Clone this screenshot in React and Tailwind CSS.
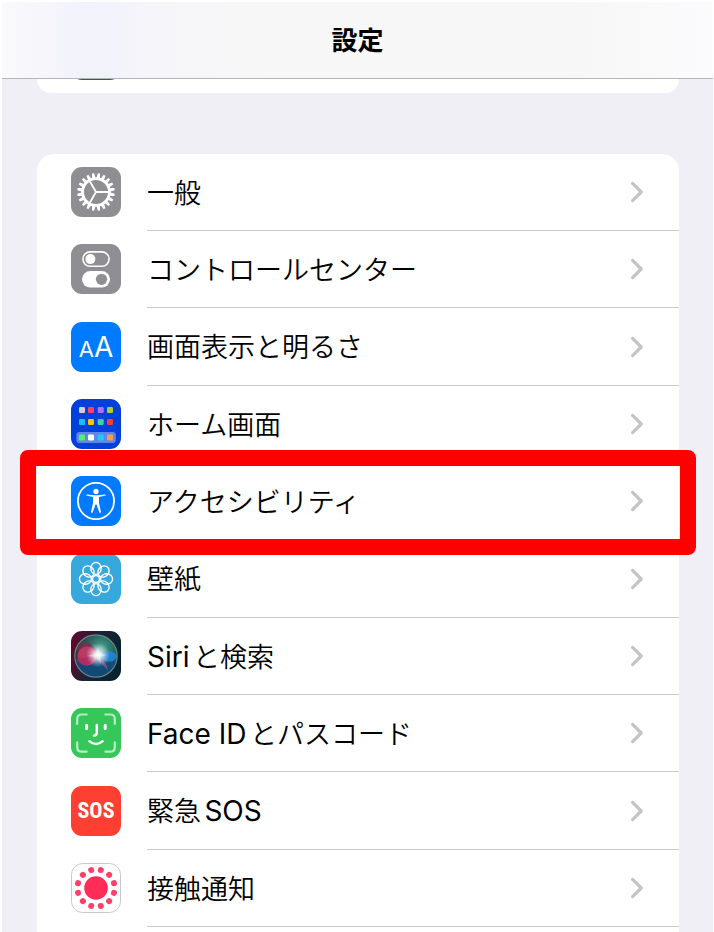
const ICON_CLASS = 'size-[50px] shrink-0 mb-px';

const GeneralIcon = () => (
  <svg viewBox="0 0 50 50" className={ICON_CLASS} aria-hidden="true">
    <rect width="50" height="50" rx="11" fill="#8e8e93" />
    {Array.from({ length: 20 }, (_, i) => (
      <path key={i} d="M23.2 11.5 L23.9 6.2 H26.1 L26.8 11.5 Z" fill="#fff" transform={`rotate(${i * 18 + 9} 25 25)`} />
    ))}
    <circle cx="25" cy="25" r="13.4" fill="none" stroke="#fff" strokeWidth="2.8" />
    <path d="M25 25 H38 M25 25 L18.5 13.8 M25 25 L18.5 36.2" stroke="#fff" strokeWidth="1.8" />
  </svg>
);

const ControlCenterIcon = () => (
  <svg viewBox="0 0 50 50" className={ICON_CLASS} aria-hidden="true">
    <rect width="50" height="50" rx="11" fill="#8e8e93" />
    <rect x="11.9" y="7.9" width="26.2" height="14.4" rx="7.2" fill="none" stroke="#fff" strokeWidth="1.6" />
    <circle cx="19.4" cy="15.1" r="5" fill="#fff" />
    <rect x="11" y="27" width="28" height="16.6" rx="8.3" fill="#fff" />
    <circle cx="30.5" cy="35.3" r="5.6" fill="#8e8e93" />
  </svg>
);

const DisplayIcon = () => (
  <span className="size-[50px] shrink-0 mb-px rounded-[11px] bg-[#007aff] text-white font-normal flex items-baseline justify-center leading-[50px]" aria-hidden="true">
    <span className="text-[22px]">A</span>
    <span className="text-[28px]">A</span>
  </span>
);

const APP_COLORS = [
  ['#d1d1d6', '#ff4068', '#b66dff', '#a8d233'],
  ['#19bfff', '#ffc400', '#3bd6a0', '#ff3b30'],
  ['#55ee70', '#ffffff', '#19ccff', '#ff9a42'],
];
const APP_X = [8, 17, 26.7, 36];
const APP_Y = [8, 20, 35.4];

const HomeScreenIcon = () => (
  <svg viewBox="0 0 50 50" className={ICON_CLASS} aria-hidden="true">
    <rect width="50" height="50" rx="11" fill="#0240dc" />
    <rect x="5.4" y="33" width="39.4" height="11" rx="3" fill="#5f86e8" />
    {APP_COLORS.map((row, r) =>
      row.map((color, c) => (
        <rect key={`${r}-${c}`} x={APP_X[c]} y={APP_Y[r]} width="6" height="6" rx="1.2" fill={color} />
      ))
    )}
  </svg>
);

const AccessibilityIcon = () => (
  <svg viewBox="0 0 50 50" className={ICON_CLASS} aria-hidden="true">
    <rect width="50" height="50" rx="11" fill="#007aff" />
    <circle cx="25" cy="25" r="18.1" fill="none" stroke="#fff" strokeWidth="1.8" />
    <circle cx="25" cy="15.4" r="2.6" fill="#fff" />
    <path
      d="M16.3 18.4 L22.8 19.2 H27.2 L33.7 18.4 Q34.9 18.5 34.7 19.6 L28 21.1 V27 L30 36 Q29.8 37.4 28.6 37 L25.5 28.6 H24.5 L21.4 37 Q20.2 37.4 20 36 L22 27 V21.1 L15.3 19.6 Q15.1 18.5 16.3 18.4 Z"
      fill="#fff"
    />
  </svg>
);

const WallpaperIcon = () => (
  <svg viewBox="0 0 50 50" className={ICON_CLASS} aria-hidden="true">
    <rect width="50" height="50" rx="11" fill="#36a8dc" />
    <g fill="none" stroke="#fff" strokeWidth="1.4">
      {Array.from({ length: 8 }, (_, i) => (
        <ellipse key={i} cx="25" cy="14.4" rx="5.2" ry="6" transform={`rotate(${i * 45} 25 25)`} />
      ))}
      <circle cx="25" cy="25" r="3.4" />
    </g>
  </svg>
);

const SiriIcon = () => (
  <svg viewBox="0 0 50 50" className={ICON_CLASS} aria-hidden="true">
    <defs>
      <linearGradient id="siri-bg" x1="0" y1="0.3" x2="1" y2="0.6">
        <stop offset="0" stopColor="#5c0b2b" />
        <stop offset="0.45" stopColor="#1c2237" />
        <stop offset="1" stopColor="#06222f" />
      </linearGradient>
      <radialGradient id="siri-green" cx="0.6" cy="0.35" r="0.5">
        <stop offset="0" stopColor="#4fae97" />
        <stop offset="1" stopColor="#0f5a4e" stopOpacity="0.5" />
      </radialGradient>
      <radialGradient id="siri-glow">
        <stop offset="0" stopColor="#fff" />
        <stop offset="0.3" stopColor="#fff" stopOpacity="0.8" />
        <stop offset="1" stopColor="#d9d0ff" stopOpacity="0" />
      </radialGradient>
      <clipPath id="siri-orb">
        <circle cx="25" cy="25" r="21" />
      </clipPath>
    </defs>
    <rect width="50" height="50" rx="11" fill="url(#siri-bg)" />
    <g clipPath="url(#siri-orb)">
      <rect width="50" height="50" fill="url(#siri-green)" />
      <path d="M4 29 Q16 36 27 24 Q36 33 47 27 V48 H4 Z" fill="#124b82" opacity="0.8" />
      <path d="M4 20 Q15 0 27 23 Q20 15 4 20 Z" fill="#812a50" opacity="0.75" />
      <ellipse cx="16" cy="25" rx="9.6" ry="9.6" fill="#dd3567" opacity="0.8" />
      <path d="M5 28 Q15 42 26 24 Q19 26 5 28 Z" fill="#a72966" opacity="0.7" />
      <ellipse cx="38" cy="25.5" rx="7.5" ry="5.2" fill="#2087de" opacity="0.85" />
      <path d="M27 24 Q35 30 37 39 Q30 34 27 24 Z" fill="#8b5877" opacity="0.8" />
    </g>
    <circle cx="25" cy="25" r="21.2" fill="none" stroke="#83a9a5" strokeWidth="1.2" opacity="0.7" />
    <circle cx="27" cy="24" r="12" fill="url(#siri-glow)" />
    <path d="M27 16 L28.8 22.3 L36 24 L28.8 25.8 L30 33 L25.8 26.4 L17 25 L24.5 22.7 Z" fill="#fff" opacity="0.4" />
  </svg>
);

const FaceIdIcon = () => (
  <svg viewBox="0 0 50 50" className={ICON_CLASS} aria-hidden="true">
    <rect width="50" height="50" rx="11" fill="#35c75a" />
    <g fill="none" stroke="#fff" strokeLinecap="round">
      <path
        d="M6.2 16 V11 Q6.2 6.5 10.7 6.5 H15.6 M34.4 6.5 H39.3 Q43.8 6.5 43.8 11 V16 M43.8 34.4 V39.2 Q43.8 43.7 39.3 43.7 H34.4 M15.6 43.7 H10.7 Q6.2 43.7 6.2 39.2 V34.4"
        strokeWidth="2.2"
        opacity="0.65"
      />
      <path d="M15.6 17.2 V20.6 M34.2 17.2 V20.6" strokeWidth="3" />
      <path d="M25.8 17 V24.8 Q25.8 27.5 22.9 27.6" strokeWidth="2.4" />
      <path d="M18.3 33.2 Q25 39 31.7 33.2" strokeWidth="2.4" />
    </g>
  </svg>
);

const SosIcon = () => (
  <span className="size-[50px] shrink-0 mb-px rounded-[11px] bg-[#ff3f31] text-white flex items-center justify-center font-bold text-[22px] leading-none font-['Liberation_Sans_Narrow','Roboto_Condensed',Roboto,sans-serif]" aria-hidden="true">
    SOS
  </span>
);

const ExposureIcon = () => (
  <svg viewBox="0 0 50 50" className={ICON_CLASS} aria-hidden="true">
    <rect x="0.5" y="0.5" width="49" height="49" rx="11" fill="#fff" stroke="#c9c9cc" />
    <circle cx="25" cy="25" r="11.8" fill="#ff2d58" />
    {Array.from({ length: 12 }, (_, i) => (
      <circle key={i} cx="25" cy="6.4" r="3" fill="#ff3f6b" transform={`rotate(${i * 30 + 15} 25 25)`} />
    ))}
  </svg>
);

const Chevron = () => (
  <svg viewBox="0 0 14 22" className="w-[14px] h-[22px] shrink-0" aria-hidden="true">
    <path d="M2.6 2.4 L11.2 11 L2.6 19.6" fill="none" stroke="#c4c4c6" strokeWidth="3.2" strokeLinecap="round" strokeLinejoin="round" />
  </svg>
);

// latin parts need a heavier weight than the kana around them
const Latin = ({ children }) => <span className="text-[28px] leading-none font-normal">{children}</span>;

const items = [
  { id: 'general', label: '一般', Icon: GeneralIcon },
  { id: 'control-center', label: 'コントロールセンター', Icon: ControlCenterIcon },
  { id: 'display', label: '画面表示と明るさ', Icon: DisplayIcon },
  { id: 'home', label: 'ホーム画面', Icon: HomeScreenIcon },
  { id: 'accessibility', label: 'アクセシビリティ', Icon: AccessibilityIcon, highlighted: true },
  { id: 'wallpaper', label: '壁紙', Icon: WallpaperIcon },
  { id: 'siri', label: <><Latin>Siri</Latin>と検索</>, Icon: SiriIcon },
  { id: 'face-id', label: <><Latin>Face ID</Latin>とパスコード</>, Icon: FaceIdIcon },
  { id: 'sos', label: <>緊急<Latin>SOS</Latin></>, Icon: SosIcon },
  { id: 'exposure', label: '接触通知', Icon: ExposureIcon },
];

const SettingsRow = ({ label, Icon, highlighted }) => (
  <li className="relative h-[77px] nth-[3n]:h-[78px]">
    <a href="#" className="flex h-full items-center gap-[26px] pl-[34px]">
      <Icon />
      <span className="flex h-full flex-1 items-center justify-between border-b border-[#c8c8ca] pr-[35px]">
        <span className="pt-1 font-[350] [text-autospace:normal]">{label}</span>
        <Chevron />
      </span>
    </a>
    {highlighted && (
      <span className="pointer-events-none absolute -inset-x-[17px] -top-[13px] -bottom-[15px] z-10 rounded-lg border-16 border-[#ff0000]" />
    )}
  </li>
);

const App = () => (
  <div className="flex min-h-screen flex-col border-t-2 border-r border-l-2 border-white bg-[#f0eff5] font-[Inter,'Noto_Sans_CJK_JP',sans-serif] text-[27px] font-normal text-black" lang="ja">
    <header className="flex h-[77px] items-center justify-center border-b border-[#b5b5b8] bg-[linear-gradient(90deg,#fafafc_0%,#f6f6fb_6%,#f2f2fb_11%,#f3f3fb_16%,#f6f6f9_23%,#f7f7f7_40%,#f7f7f7_80%,#fbfbfd_100%)]">
      <h1 className="text-[26px] font-bold">設定</h1>
    </header>
    <main className="flex flex-1 flex-col pr-[34px] pl-[35px]">
      <div className="flex h-[14px] items-end overflow-hidden rounded-b-[17px] bg-white pb-[13px] pl-[34px]">
        <span className="size-[50px] shrink-0 rounded-[11px] bg-[#4040d0]" />
      </div>
      <ul className="mt-[61px] flex-1 rounded-t-[17px] bg-white">
        {items.map((item) => (
          <SettingsRow key={item.id} {...item} />
        ))}
      </ul>
    </main>
  </div>
);

export default App;
